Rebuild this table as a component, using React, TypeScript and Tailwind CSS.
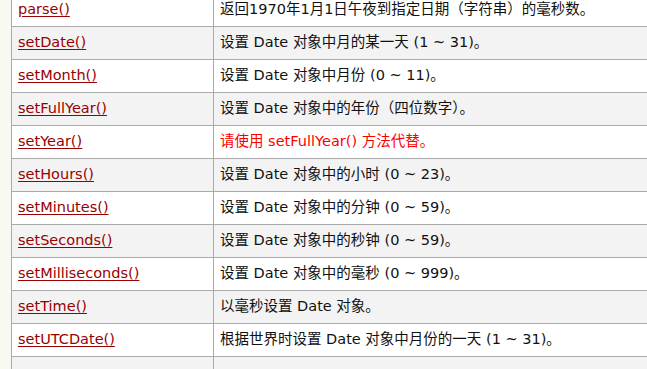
const rows: { name: string; desc: string; warn?: boolean }[] = [
  { name: "parse()", desc: "返回1970年1月1日午夜到指定日期（字符串）的毫秒数。" },
  { name: "setDate()", desc: "设置 Date 对象中月的某一天 (1 ~ 31)。" },
  { name: "setMonth()", desc: "设置 Date 对象中月份 (0 ~ 11)。" },
  { name: "setFullYear()", desc: "设置 Date 对象中的年份（四位数字）。" },
  { name: "setYear()", desc: "请使用 setFullYear() 方法代替。", warn: true },
  { name: "setHours()", desc: "设置 Date 对象中的小时 (0 ~ 23)。" },
  { name: "setMinutes()", desc: "设置 Date 对象中的分钟 (0 ~ 59)。" },
  { name: "setSeconds()", desc: "设置 Date 对象中的秒钟 (0 ~ 59)。" },
  { name: "setMilliseconds()", desc: "设置 Date 对象中的毫秒 (0 ~ 999)。" },
  { name: "setTime()", desc: "以毫秒设置 Date 对象。" },
  { name: "setUTCDate()", desc: "根据世界时设置 Date 对象中月份的一天 (1 ~ 31)。" },
  { name: "", desc: "" },
];

export default function App() {
  return (
    <div
      className="h-[369px] w-[647px] overflow-hidden bg-[#f9f9f4] pl-[11px] text-[14.5px] text-[#111]"
      style={{ fontFamily: '"DejaVu Sans", Verdana, "Noto Sans CJK SC", sans-serif' }}
    >
      <div className="-mt-[6px] w-[700px] border-l border-[#aaa] bg-white">
        {rows.map((r, i) => (
          <div
            key={i}
            className={`flex h-[33px] items-center border-b border-[#aaa] ${
              i % 2 === 1 ? "bg-[#f3f3f3]" : "bg-white"
            }`}
          >
            <div className="flex h-full w-[202px] shrink-0 items-center border-r border-[#aaa] pl-[6px]">
              {r.name && (
                <a href="#" className="text-[#900] underline underline-offset-2">
                  {r.name}
                </a>
              )}
            </div>
            <div className={`pl-[6px] ${r.warn ? "text-[#f00]" : ""}`}>{r.desc}</div>
          </div>
        ))}
      </div>
    </div>
  );
}
